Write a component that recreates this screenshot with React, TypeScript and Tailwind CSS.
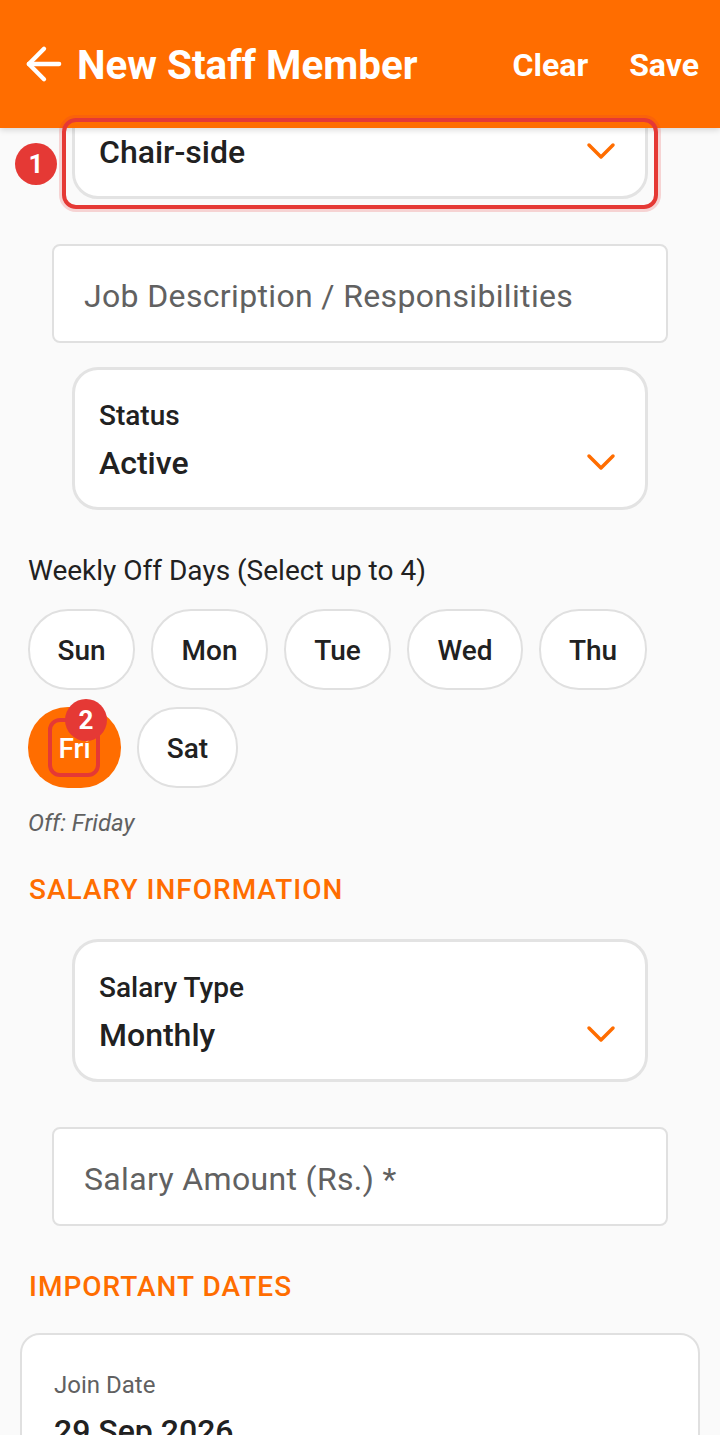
import { ArrowLeft, ChevronDown } from "lucide-react";

const SelectCard = ({ label, value }: { label: string; value: string }) => (
  <div className="mx-[72px] flex h-[143px] flex-col rounded-[26px] border-[3px] border-[#e3e3e3] bg-white pl-[24px] pr-[20px] pt-[30px]">
    <div className="h-[32px] text-[28px] leading-[32px] font-medium text-[#212121]">{label}</div>
    <div className="mt-[7px] flex items-start justify-between">
      <span className="text-[32px] leading-[48px] font-medium text-[#212121]">{value}</span>
      <ChevronDown className="-mt-[1px] text-[#ff6d00]" size={48} strokeWidth={1.75} />
    </div>
  </div>
);

const TextField = ({ placeholder }: { placeholder: string }) => (
  <div className="mx-[52px] flex h-[99px] items-center rounded-[8px] border-2 border-[#e0e0e0] bg-white px-[30px] pt-[4px] text-[32px] tracking-[0.35px] text-[#616161]">
    {placeholder}
  </div>
);

const Chip = ({ label, width }: { label: string; width: string }) => (
  <div className={`flex h-[81px] items-center justify-center rounded-[40px] border-2 border-[#e0e0e0] bg-white pt-[3px] text-[28px] font-medium text-[#212121] ${width}`}>
    {label}
  </div>
);

const Section = ({ children }: { children: string }) => (
  <div className="ml-[29px] text-[28px] leading-[32px] font-medium tracking-[1px] text-[#ff6d00]">{children}</div>
);

export default function App() {
  return (
    <div className="flex h-[1435px] w-[720px] flex-col overflow-hidden bg-[#fafafa] font-['Roboto',sans-serif]">
      <header className="relative z-10 flex h-[128px] shrink-0 items-center bg-[#ff6d00] pl-[18px] pr-[21px] pt-[4px] text-white shadow-[0_2px_6px_rgba(0,0,0,0.15)]">
        <ArrowLeft className="-mt-[4px]" size={52} strokeWidth={2} />
        <h1 className="ml-[7px] flex-1 text-[40.4px] font-bold">New Staff Member</h1>
        <button className="-mt-[2px] text-[32px] font-bold">Clear</button>
        <button className="-mt-[2px] ml-[41px] text-[32px] font-bold">Save</button>
      </header>

      <main className="-mt-[72px]">
        <div className="relative">
          <SelectCard label="Role" value="Chair-side" />
          <div className="absolute left-[62px] top-[62px] z-20 h-[91px] w-[596px] rounded-[14px] border-[4px] border-[#e53935] shadow-[0_0_0_3px_rgba(229,57,53,0.2)]" />
          <div className="absolute left-[15px] top-[87px] z-20 flex h-[42px] w-[42px] items-center justify-center rounded-full bg-[#e53935] text-[26px] font-bold text-white">
            1
          </div>
        </div>

        <div className="mt-[45px]">
          <TextField placeholder="Job Description / Responsibilities" />
        </div>
        <div className="mt-[24px]">
          <SelectCard label="Status" value="Active" />
        </div>

        <div className="ml-[28px] mt-[44px] text-[28px] leading-[34px] text-[#212121]">Weekly Off Days (Select up to 4)</div>

        <div className="ml-[28px] mt-[21px] flex gap-[16px]">
          <Chip label="Sun" width="w-[107px]" />
          <Chip label="Mon" width="w-[117px]" />
          <Chip label="Tue" width="w-[107px]" />
          <Chip label="Wed" width="w-[116px]" />
          <Chip label="Thu" width="w-[108px]" />
        </div>
        <div className="ml-[28px] mt-[17px] flex gap-[16px]">
          <div className="relative flex h-[81px] w-[93px] items-center justify-center rounded-[40px] bg-[#ff6d00] pt-[3px] text-[28px] font-medium text-white">
            Fri
            <div className="absolute left-[20px] top-[11px] h-[59px] w-[52px] rounded-[12px] border-[4px] border-[#e53935]" />
            <div className="absolute left-[37px] top-[-8px] flex h-[42px] w-[42px] items-center justify-center rounded-full bg-[#e53935] text-[26px] font-bold text-white">
              2
            </div>
          </div>
          <Chip label="Sat" width="w-[101px]" />
        </div>

        <div className="ml-[28px] mt-[20px] text-[24px] leading-[30px] text-[#616161] italic">Off: Friday</div>

        <div className="mt-[36px]">
          <Section>SALARY INFORMATION</Section>
        </div>
        <div className="mt-[33px]">
          <SelectCard label="Salary Type" value="Monthly" />
        </div>
        <div className="mt-[45px]">
          <TextField placeholder="Salary Amount (Rs.) *" />
        </div>
        <div className="mt-[45px]">
          <Section>IMPORTANT DATES</Section>
        </div>

        <div className="mx-[20px] mt-[30px] h-[200px] rounded-[20px] border-2 border-[#e0e0e0] bg-white px-[32px] pt-[35px]">
          <div className="text-[24px] leading-[30px] text-[#616161]">Join Date</div>
          <div className="mt-[12px] text-[32px] leading-[38px] font-medium text-[#212121]">29 Sep 2026</div>
        </div>
      </main>
    </div>
  );
}
